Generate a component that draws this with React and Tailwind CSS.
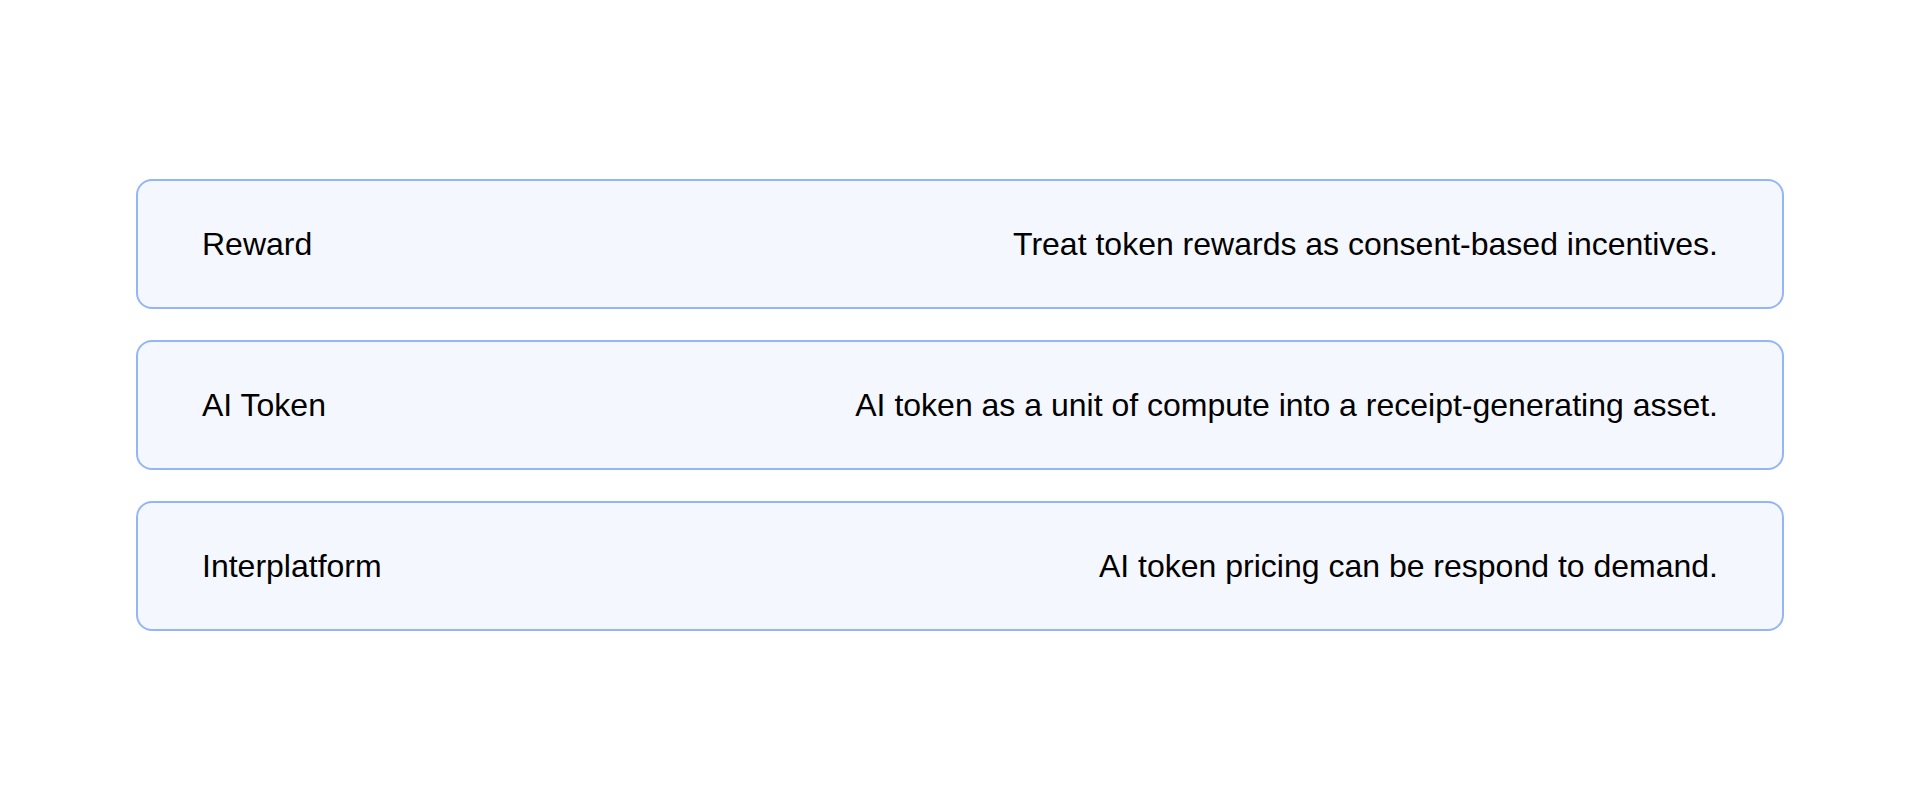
export default function App() {
  const rows = [
    ["Reward", "Treat token rewards as consent-based incentives."],
    ["AI Token", "AI token as a unit of compute into a receipt-generating asset."],
    ["Interplatform", "AI token pricing can be respond to demand."],
  ];
  return (
    <div
      className="flex min-h-screen w-full items-center justify-center bg-white"
      style={{ fontFamily: '"Liberation Sans", Arial, Helvetica, sans-serif' }}
    >
      <div className="flex w-[1648px] flex-col gap-[31px]">
        {rows.map(([a, b]) => (
          <div
            key={a}
            className="flex h-[130px] items-center justify-between rounded-2xl border-2 border-[#94b6f7] bg-[#f4f7fe] px-16 text-[32px] leading-none text-black"
          >
            <span>{a}</span>
            <span>{b}</span>
          </div>
        ))}
      </div>
    </div>
  );
}
